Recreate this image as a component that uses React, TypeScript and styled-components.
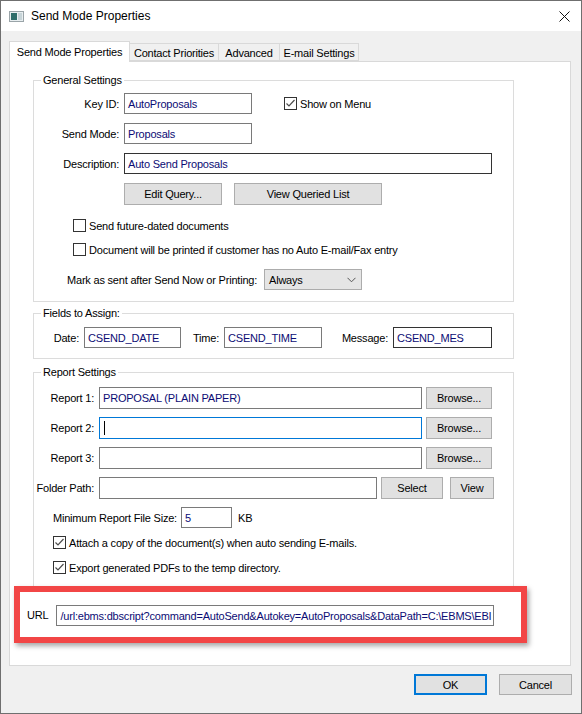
import { FC, ReactNode } from 'react'
import styled, { createGlobalStyle } from 'styled-components'

const GlobalStyle = createGlobalStyle`
  html, body {
    margin: 0;
    padding: 0;
    background: #ffffff;
  }
  body {
    font-family: "Liberation Sans", Arial, sans-serif;
    font-size: 11px;
    letter-spacing: -0.2px;
    color: #000;
  }
  * { box-sizing: border-box; }
`

const Window = styled.div`
  width: 582px;
  height: 714px;
  border: 1px solid #6f6f6f;
  background: #f0f0f0;
  display: flex;
  flex-direction: column;
`

const TitleBar = styled.div`
  height: 30px;
  background: #ffffff;
  display: flex;
  align-items: center;
  padding: 0 11px 0 8px;
  font-size: 12px;
  letter-spacing: 0;
  color: #000;
`

const TitleText = styled.span`
  margin-left: 7px;
  flex: 1;
`

const Body = styled.div`
  flex: 1;
  padding: 10px 11px 0 8px;
  display: flex;
  flex-direction: column;
`

const TabStrip = styled.div`
  display: flex;
  align-items: flex-end;
  height: 21px;
  margin-bottom: -1px;
  position: relative;
  z-index: 2;
`

const Tab = styled.div<{ $active?: boolean; $w: number }>`
  width: ${p => p.$w}px;
  height: ${p => (p.$active ? 21 : 18)}px;
  margin-bottom: ${p => (p.$active ? 0 : 1)}px;
  margin-left: -1px;
  &:first-child { margin-left: 0; }
  border: 1px solid #d9d9d9;
  border-bottom: ${p => (p.$active ? 'none' : '1px solid #d9d9d9')};
  background: ${p => (p.$active ? '#ffffff' : '#f0f0f0')};
  display: flex;
  align-items: center;
  justify-content: center;
  padding-top: ${p => (p.$active ? 0 : 1)}px;
  white-space: nowrap;
`

const Panel = styled.div`
  width: 562px;
  height: 605px;
  background: #ffffff;
  border: 1px solid #d9d9d9;
  padding: 11px 0 0 23px;
  display: flex;
  flex-direction: column;
`

const Group = styled.fieldset<{ $mt: number; $pt: number; $pb: number }>`
  width: 481px;
  margin: ${p => p.$mt}px 0 0 0;
  padding: ${p => p.$pt}px 0 ${p => p.$pb}px 0;
  border: 1px solid #dcdcdc;
  min-width: 0;
  display: flex;
  flex-direction: column;
`

const Legend = styled.legend`
  margin-left: 7px;
  padding: 0 2px;
  line-height: 14px;
`

const Row = styled.div<{ $mt?: number; $indent?: number; $h?: number }>`
  display: flex;
  align-items: center;
  margin-top: ${p => p.$mt ?? 0}px;
  padding-left: ${p => p.$indent ?? 0}px;
  height: ${p => p.$h ?? 21}px;
  white-space: nowrap;
`

const FieldLabel = styled.span<{ $w: number; $left?: boolean }>`
  width: ${p => p.$w}px;
  flex: none;
  text-align: ${p => (p.$left ? 'left' : 'right')};
  margin-right: 5px;
  white-space: nowrap;
`

const TextBox = styled.div<{ $w: number; $h?: number; $tone?: 'dark' | 'focus' }>`
  width: ${p => p.$w}px;
  height: ${p => p.$h ?? 21}px;
  flex: none;
  background: #ffffff;
  border: 1px solid
    ${p => (p.$tone === 'dark' ? '#333333' : p.$tone === 'focus' ? '#0078d7' : '#7a7a7a')};
  color: #0c0c74;
  display: flex;
  align-items: center;
  padding-left: 3px;
  overflow: hidden;
  white-space: nowrap;
`

const Caret = styled.span`
  width: 1px;
  height: 14px;
  background: #000;
  margin-left: 1px;
`

const Button = styled.div<{ $w: number; $ml?: number; $h?: number; $default?: boolean }>`
  width: ${p => p.$w}px;
  height: ${p => p.$h ?? 22}px;
  margin-left: ${p => p.$ml ?? 0}px;
  flex: none;
  background: #e1e1e1;
  border: ${p => (p.$default ? '2px solid #0078d7' : '1px solid #adadad')};
  display: flex;
  align-items: center;
  justify-content: center;
`

const Select = styled.div`
  width: 98px;
  height: 21px;
  background: #e5e5e5;
  border: 1px solid #acacac;
  display: flex;
  align-items: center;
  justify-content: space-between;
  padding: 0 5px 0 4px;
`

const Box = styled.span`
  width: 13px;
  height: 13px;
  flex: none;
  border: 1px solid #333333;
  background: #ffffff;
  display: flex;
  align-items: center;
  justify-content: center;
  margin-right: 3px;
`

const Suffix = styled.span`
  margin-left: 6px;
`

const Highlight = styled.div`
  position: relative;
  z-index: 1;
  width: 513px;
  height: 57px;
  margin: -2px 0 0 -19px;
  border: 6px solid #f24646;
  background: #ffffff;
  box-shadow: 2px 3px 5px rgba(0, 0, 0, 0.35);
  display: flex;
  align-items: flex-start;
  padding: 13px 0 0 7px;
`

const UrlLabel = styled.span`
  margin-right: 8px;
  line-height: 21px;
`

const Footer = styled.div`
  display: flex;
  justify-content: flex-end;
  gap: 12px;
  margin: 8px -2px 0 0;
`

const Check: FC<{ checked?: boolean; children: ReactNode }> = ({ checked, children }) => (
  <>
    <Box>
      {checked && (
        <svg width="11" height="11" viewBox="0 0 11 11">
          <polyline points="1.5,5.5 4,8 9.5,2" fill="none" stroke="#4d4d4d" strokeWidth="1.2" />
        </svg>
      )}
    </Box>
    <span>{children}</span>
  </>
)

const AppIcon = () => (
  <svg width="15" height="11" viewBox="0 0 15 11">
    <rect x="0.5" y="0.5" width="14" height="10" fill="#e8eef0" stroke="#9aa4a8" />
    <rect x="2" y="2" width="6" height="7" fill="#2f6d6a" />
    <rect x="9" y="2" width="4" height="7" fill="#c7d4d8" />
  </svg>
)

const CloseIcon = () => (
  <svg width="11" height="11" viewBox="0 0 11 11">
    <path d="M0.5 0.5 L10.5 10.5 M10.5 0.5 L0.5 10.5" stroke="#111" strokeWidth="1" />
  </svg>
)

const Chevron = () => (
  <svg width="9" height="6" viewBox="0 0 9 6">
    <polyline points="0.5,0.8 4.5,4.8 8.5,0.8" fill="none" stroke="#555" strokeWidth="1" />
  </svg>
)

const App: FC = () => {
  return (
    <>
      <GlobalStyle />
      <Window>
        <TitleBar>
          <AppIcon />
          <TitleText>Send Mode Properties</TitleText>
          <CloseIcon />
        </TitleBar>
        <Body>
          <TabStrip>
            <Tab $active $w={121}>Send Mode Properties</Tab>
            <Tab $w={90}>Contact Priorities</Tab>
            <Tab $w={62}>Advanced</Tab>
            <Tab $w={80}>E-mail Settings</Tab>
          </TabStrip>
          <Panel>
            {/* General Settings */}
            <Group $mt={0} $pt={6} $pb={11}>
              <Legend>General Settings</Legend>
              <Row>
                <FieldLabel $w={85}>Key ID:</FieldLabel>
                <TextBox $w={128}>AutoProposals</TextBox>
                <Row $indent={32} $h={13}>
                  <Check checked>Show on Menu</Check>
                </Row>
              </Row>
              <Row $mt={9}>
                <FieldLabel $w={85}>Send Mode:</FieldLabel>
                <TextBox $w={128}>Proposals</TextBox>
              </Row>
              <Row $mt={9}>
                <FieldLabel $w={85}>Description:</FieldLabel>
                <TextBox $w={368} $tone="dark">Auto Send Proposals</TextBox>
              </Row>
              <Row $mt={9} $h={22} $indent={90}>
                <Button $w={98}>Edit Query...</Button>
                <Button $w={148} $ml={12}>View Queried List</Button>
              </Row>
              <Row $mt={14} $h={13} $indent={39}>
                <Check>Send future-dated documents</Check>
              </Row>
              <Row $mt={11} $h={13} $indent={39}>
                <Check>Document will be printed if customer has no Auto E-mail/Fax entry</Check>
              </Row>
              <Row $mt={13} $indent={33}>
                <FieldLabel $w={192} $left>Mark as sent after Send Now or Printing:</FieldLabel>
                <Select>
                  <span>Always</span>
                  <Chevron />
                </Select>
              </Row>
            </Group>

            {/* Fields to Assign */}
            <Group $mt={4} $pt={7} $pb={10}>
              <Legend>Fields to Assign:</Legend>
              <Row>
                <FieldLabel $w={45}>Date:</FieldLabel>
                <TextBox $w={97}>CSEND_DATE</TextBox>
                <FieldLabel $w={38}>Time:</FieldLabel>
                <TextBox $w={98}>CSEND_TIME</TextBox>
                <FieldLabel $w={66}>Message:</FieldLabel>
                <TextBox $w={99} $tone="dark">CSEND_MES</TextBox>
              </Row>
            </Group>

            {/* Report Settings */}
            <Group $mt={6} $pt={8} $pb={13}>
              <Legend>Report Settings</Legend>
              <Row $h={22}>
                <FieldLabel $w={60}>Report 1:</FieldLabel>
                <TextBox $w={323} $h={22}>PROPOSAL (PLAIN PAPER)</TextBox>
                <Button $w={66} $ml={4}>Browse...</Button>
              </Row>
              <Row $mt={8} $h={22}>
                <FieldLabel $w={60}>Report 2:</FieldLabel>
                <TextBox $w={323} $h={22} $tone="focus"><Caret /></TextBox>
                <Button $w={66} $ml={4}>Browse...</Button>
              </Row>
              <Row $mt={8} $h={22}>
                <FieldLabel $w={60}>Report 3:</FieldLabel>
                <TextBox $w={323} $h={22} />
                <Button $w={66} $ml={4}>Browse...</Button>
              </Row>
              <Row $mt={8} $h={22}>
                <FieldLabel $w={60}>Folder Path:</FieldLabel>
                <TextBox $w={278} $h={22} />
                <Button $w={62} $ml={4}>Select</Button>
                <Button $w={44} $ml={7}>View</Button>
              </Row>
              <Row $mt={8} $indent={19}>
                <FieldLabel $w={123} $left>Minimum Report File Size:</FieldLabel>
                <TextBox $w={51}>5</TextBox>
                <Suffix>KB</Suffix>
              </Row>
              <Row $mt={8} $h={13} $indent={19}>
                <Check checked>Attach a copy of the document(s) when auto sending E-mails.</Check>
              </Row>
              <Row $mt={12} $h={13} $indent={19}>
                <Check checked>Export generated PDFs to the temp directory.</Check>
              </Row>
            </Group>

            <Highlight>
              <UrlLabel>URL</UrlLabel>
              <TextBox $w={438}>
                /url:ebms:dbscript?command=AutoSend&amp;Autokey=AutoProposals&amp;DataPath=C:\EBMS\EBI
              </TextBox>
            </Highlight>
          </Panel>
          <Footer>
            <Button $w={73} $h={21} $default>OK</Button>
            <Button $w={73} $h={21}>Cancel</Button>
          </Footer>
        </Body>
      </Window>
    </>
  )
}

export default App
